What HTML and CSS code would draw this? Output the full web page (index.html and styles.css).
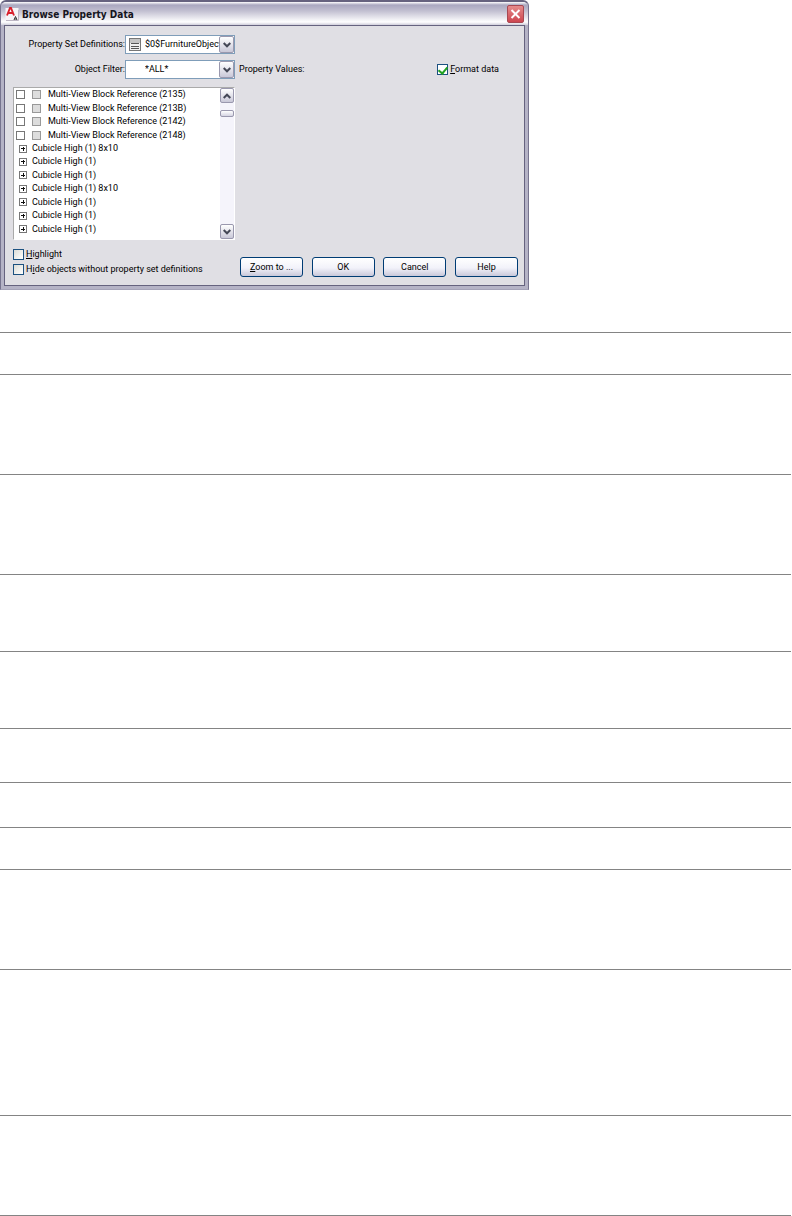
FILE: index.html
```html
<!DOCTYPE html>
<html lang="en">
<head>
<meta charset="utf-8">
<title>Browse Property Data</title>
<link rel="stylesheet" href="styles.css">
</head>
<body>
<main>
<section class="dialog" aria-labelledby="dialog-title">
  <header class="titlebar">
    <svg class="logo" viewBox="0 0 14 14" aria-hidden="true">
      <rect x="0.5" y="1" width="13" height="12.5" fill="#f6f4f7"/>
      <path d="M13.5 3v10.5H1" fill="none" stroke="#bdb6c4"/>
      <path d="M2 8.500 5 1h1L9 8.500M3.500 6h4.500" fill="none" stroke="#d8202c" stroke-width="1.900"/>
      <path d="M9 13l1.500-3.500L12 13M9.500 12h2" fill="none" stroke="#333" stroke-width="1"/>
    </svg>
    <h1 id="dialog-title">Browse Property Data</h1>
    <button class="close" type="button" aria-label="Close">
      <svg viewBox="0 0 17 18" aria-hidden="true"><path d="M4 4.500l9 9M13 4.500l-9 9" stroke="#fff" stroke-width="2.200"/></svg>
    </button>
  </header>
  <form class="panel">
    <div class="field">
      <label for="definitions">Property Set Definitions:</label>
      <div class="combo">
        <svg class="combo-icon" viewBox="0 0 12 13" aria-hidden="true"><rect x=".5" y=".5" width="11" height="12" fill="#eee" stroke="#777"/><path d="M1 1h10v4H1z" fill="#c4c4c4"/><path d="M2 5.500h8M2 8.500h8M2 10.500h8" stroke="#555"/></svg>
        <select id="definitions"><option>$0$FurnitureObjects</option></select>
        <span class="arrow"><svg viewBox="0 0 8 6" aria-hidden="true"><path d="M.7 1 4 4.300 7.300 1" fill="none" stroke="#444756" stroke-width="2"/></svg></span>
      </div>
    </div>
    <div class="filter-row">
      <div class="field">
        <label for="filter">Object Filter:</label>
        <div class="combo">
          <select id="filter"><option>*ALL*</option></select>
          <span class="arrow"><svg viewBox="0 0 8 6" aria-hidden="true"><path d="M.7 1 4 4.300 7.300 1" fill="none" stroke="#444756" stroke-width="2"/></svg></span>
        </div>
      </div>
      <div class="values">
        <span>Property Values:</span>
        <label class="check format"><input type="checkbox" checked><span><u>F</u>ormat data</span></label>
      </div>
    </div>
    <div class="listbox">
      <ul class="tree">
        <li><label><input type="checkbox"><i class="swatch"></i>Multi-View Block Reference (2135)</label></li>
        <li><label><input type="checkbox"><i class="swatch"></i>Multi-View Block Reference (213B)</label></li>
        <li><label><input type="checkbox"><i class="swatch"></i>Multi-View Block Reference (2142)</label></li>
        <li><label><input type="checkbox"><i class="swatch"></i>Multi-View Block Reference (2148)</label></li>
        <li><button class="expand" type="button" aria-label="Expand"></button>Cubicle High (1) 8x10</li>
        <li><button class="expand" type="button" aria-label="Expand"></button>Cubicle High (1)</li>
        <li><button class="expand" type="button" aria-label="Expand"></button>Cubicle High (1)</li>
        <li><button class="expand" type="button" aria-label="Expand"></button>Cubicle High (1) 8x10</li>
        <li><button class="expand" type="button" aria-label="Expand"></button>Cubicle High (1)</li>
        <li><button class="expand" type="button" aria-label="Expand"></button>Cubicle High (1)</li>
        <li><button class="expand" type="button" aria-label="Expand"></button>Cubicle High (1)</li>
      </ul>
      <div class="scrollbar">
        <button type="button" aria-label="Scroll up"><svg viewBox="0 0 8 6" aria-hidden="true"><path d="M.7 5 4 1.700 7.300 5" fill="none" stroke="#444756" stroke-width="2"/></svg></button>
        <span class="thumb"></span>
        <button type="button" aria-label="Scroll down"><svg viewBox="0 0 8 6" aria-hidden="true"><path d="M.7 1 4 4.300 7.300 1" fill="none" stroke="#444756" stroke-width="2"/></svg></button>
      </div>
    </div>
    <footer class="footer">
      <div class="options">
        <label class="check"><input type="checkbox"><span><u>H</u>ighlight</span></label>
        <label class="check"><input type="checkbox"><span>H<u>i</u>de objects without property set definitions</span></label>
      </div>
      <div class="actions">
        <button type="button"><u>Z</u>oom to ...</button>
        <button type="button">OK</button>
        <button type="button">Cancel</button>
        <button type="button">Help</button>
      </div>
    </footer>
  </form>
</section>
<div class="rules">
  <div class="row short"></div>
  <div class="row tall"></div>
  <div class="row tall"></div>
  <div class="row medium"></div>
  <div class="row medium"></div>
  <div class="row small"></div>
  <div class="row compact"></div>
  <div class="row short"></div>
  <div class="row tall"></div>
  <div class="row large"></div>
  <div class="row tall"></div>
</div>
</main>
</body>
</html>
```
FILE: styles.css
```css
* { box-sizing: border-box; }
body { margin: 0; background: #fff; color: #000; font: 9px/13px Roboto, sans-serif; }
button, select, input { margin: 0; padding: 0; font: inherit; color: inherit; }
svg { display: block; }
u { text-underline-offset: 1px; }

.dialog {
  max-width: 529px;
  padding: 0 3px 3px;
  border: 1px solid #77748f;
  border-top: 2px solid #66637f;
  border-bottom-color: #a5a3b8;
  border-radius: 6px 6px 0 0;
  background: #b5b3c6;
}
.titlebar {
  display: flex;
  align-items: center;
  gap: 3px;
  height: 23px;
  margin: 0 -3px;
  padding: 1px 4px 0;
  border-radius: 5px 5px 0 0;
  background: linear-gradient(#fff 0, #aaa8c0 3px, #c2c0d1 9px, #fff 20px, #d0cedb 23px);
}
.logo { width: 14px; height: 14px; }
.titlebar h1 { flex: 1; margin: 0; padding-top: 2px; font: bold 10px/14px "DejaVu Sans Condensed", sans-serif; color: #151520; }
.close { width: 17px; height: 18px; border: 1px solid #a84852; border-radius: 2px; background: linear-gradient(#e58b8b, #cd4650); }
.close svg { width: 100%; height: 100%; }

.panel { padding: 9px 6px 8px 8px; border: 1px solid #66637f; background: #e0dfe4; }
.field { display: flex; width: 222px; justify-content: flex-end; }
.field label { line-height: 18px; }
.combo { position: relative; width: 110px; height: 19px; border: 1px solid #7f9db9; background: #fff; overflow: hidden; }
.combo select {
  width: 93px;
  height: 17px;
  padding-left: 19px;
  border: 0;
  background: none;
  appearance: none;
  line-height: 17px;
}
.combo-icon { position: absolute; left: 3px; top: 2px; width: 12px; height: 13px; }
.arrow {
  position: absolute;
  top: 0;
  right: 0;
  display: grid;
  place-items: center;
  width: 15px;
  height: 17px;
  border: 1px solid #9a98ae;
  border-radius: 2px;
  background: linear-gradient(#fff, #c9c8d8);
  pointer-events: none;
}
.arrow svg, .scrollbar svg { width: 8px; height: 6px; }
.filter-row { display: flex; gap: 4px; margin: 6px 0 8px; }
.values { flex: 1; display: flex; justify-content: space-between; align-items: center; }
.check { display: flex; align-items: center; gap: 2px; }
.check input {
  display: grid;
  place-content: start center;
  width: 11px;
  height: 11px;
  border: 1px solid #1c5180;
  background: linear-gradient(135deg, #dcdcd7, #fff);
  appearance: none;
}
.check input:checked { background: #fff; }
.check input:checked::after {
  content: "";
  width: 4px;
  height: 7px;
  border: solid #21a121;
  border-width: 0 2px 2px 0;
  transform: rotate(40deg);
}
.format { margin-right: 19px; }

.listbox { display: flex; width: 222px; height: 153px; border: 1px solid #aaa; border-color: #aaa #fff #fff #aaa; background: #fff; }
.tree { flex: 1; display: grid; grid-auto-rows: 1fr; margin: 0 0 3px; padding: 0; list-style: none; }
.tree li, .tree li label { display: flex; align-items: center; min-height: 0; white-space: nowrap; }
.tree input { width: 9px; height: 9px; margin: 0 7px 0 2px; border: 1px solid #777; background: #fff; appearance: none; }
.swatch { width: 9px; height: 9px; margin-right: 7px; border: 1px solid #999; background: #ddd; }
.expand {
  width: 8px;
  height: 8px;
  margin: 0 5px;
  border: 1px solid #777;
  background: linear-gradient(#111, #111) center / 4px 1px no-repeat, linear-gradient(#111, #111) center / 1px 4px no-repeat, #fff;
}
.scrollbar { display: flex; flex-direction: column; width: 14px; background: #f5f4fb; }
.scrollbar button { display: grid; place-items: center; height: 15px; border: 1px solid #9a98ae; border-radius: 2px; background: linear-gradient(#fff, #c9c8d8); }
.thumb { height: 7px; margin: 7px 0 auto; border: 1px solid #9a98ae; border-radius: 2px; background: linear-gradient(#fff, #d5d4e2); }

.footer { display: flex; gap: 5px; margin-top: 7px; }
.options { width: 222px; white-space: nowrap; }
.options .check { height: 15px; }
.actions { flex: 1; display: flex; justify-content: space-between; align-items: flex-end; }
.actions button { width: 63px; height: 20px; border: 1px solid #003c74; border-radius: 3px; background: linear-gradient(#fff, #f2f2fa 55%, #c9c8da); }

.rules { margin: 42px 1px 0 0; border-top: 1px solid #848484; }
.row { border-bottom: 1px solid #848484; }
.short { height: 42px; }
.compact { height: 45px; }
.small { height: 54px; }
.medium { height: 77px; }
.tall { height: 100px; }
.large { height: 146px; }
```
